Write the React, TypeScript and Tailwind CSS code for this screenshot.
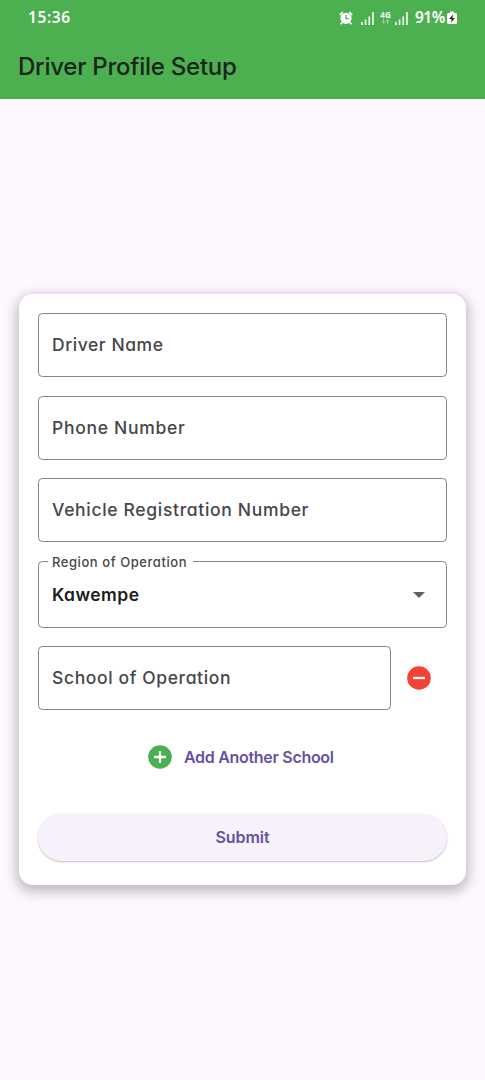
import type { ReactNode } from "react";

function Signal() {
  return (
    <svg className="h-[13px] w-[13px]" viewBox="0 0 13 13" fill="#f0f9f0">
      <path d="M0 10h1.700v3H0zM3.700 7.500h1.700v5.500H3.700zM7.400 4.500h1.700v8.500H7.400zM11.100 0h1.700v13h-1.700z" />
    </svg>
  );
}

function StatusBar() {
  return (
    <div className="flex h-9 items-center justify-between pl-[28px] pr-[28px] text-white">
      <span className="-mt-px font-['Noto_Sans'] text-[15.5px] font-semibold tracking-[0.6px]">15:36</span>
      <div className="flex items-center">
        <svg className="mr-[8px] h-[14px] w-[14px]" viewBox="0 0 14 14">
          <circle cx="7" cy="7.300" r="5.600" fill="#fff" />
          <path d="M.8 3.800L3.800 1M13.200 3.800L10.200 1M3 11.500l-1.500 1.700M11 11.500l1.500 1.700" stroke="#fff" strokeWidth="1.700" />
          <path d="M7 4v3.700h2.600" fill="none" stroke="#4caf50" strokeWidth="1.200" />
        </svg>
        <Signal />
        <div className="ml-[6px] mr-[4px] flex h-[16px] w-[11px] flex-col items-center">
          <span className="font-['Noto_Sans'] text-[8px] leading-[9px] font-bold">4G</span>
          <svg className="h-[5px] w-[9px]" viewBox="0 0 9 5" fill="none" stroke="#a5d7a7" strokeWidth=".9">
            <path d="M2.500 0v4M1 2.500l1.500 1.800L4 2.500M6.500 5V1M5 2.500L6.500.7 8 2.500" />
          </svg>
        </div>
        <Signal />
        <span className="-mt-px ml-[7px] w-[32px] whitespace-nowrap font-['Noto_Sans'] text-[15.5px] font-semibold tracking-[-0.5px]">91%</span>
        <svg className="h-[14px] w-[10px]" viewBox="0 0 10 14">
          <path d="M3 .5h4V2h1.500Q10 2 10 3.500v8Q10 13 8.500 13h-7Q0 13 0 11.500v-8Q0 2 1.500 2H3z" fill="#fff" />
          <path d="M6 3.500L2 8h2.500L4 11.500 8 7H5.500z" fill="#1d301e" />
        </svg>
      </div>
    </div>
  );
}

function Field({ children, className = "" }: { children: ReactNode; className?: string }) {
  return (
    <div className={`flex h-[64px] items-center rounded-[4.500px] border border-[#858387] pt-px pl-[13px] text-[17.5px] font-medium whitespace-nowrap text-[#49454b] ${className}`}>
      {children}
    </div>
  );
}

export default function App() {
  return (
    <div className="flex h-[1080px] w-full flex-col bg-[#fef7ff] font-['Inter',sans-serif] [font-feature-settings:'cv11']">
      <header className="h-[99px] shrink-0 bg-[#4caf50]">
        <StatusBar />
        <h1 className="pl-[18px] pt-[13px] text-[24px] leading-[36px] font-medium tracking-[-0.25px] whitespace-nowrap text-[#1a251c]">Driver Profile Setup</h1>
      </header>

      <main className="mx-[19px] mt-[195px] h-[591px] shrink-0 rounded-[14px] bg-white px-[19px] pt-[19px] shadow-[0_4px_12px_3px_rgba(0,0,0,0.24)]">
        <div className="flex w-[409px] flex-col">
          <Field><span className="tracking-[0.56px]">Driver Name</span></Field>
          <Field className="mt-[19px]"><span className="tracking-[0.7px]">Phone Number</span></Field>
          <Field className="mt-[18px]"><span className="tracking-[0.68px]">Vehicle Registration Number</span></Field>

          <fieldset className="mt-[11px] flex h-[75px] min-w-0 flex-col rounded-[4.500px] border border-[#858387] px-[9px]">
            <legend className="h-[17px] w-[145px] pl-[4px] pt-px text-[13px] leading-[17px] font-medium tracking-[0.56px] whitespace-nowrap text-[#49454b]">Region of Operation</legend>
            <div className="flex h-[50px] items-center justify-between pl-[4px] pr-[12px]">
              <span className="pt-px text-[17.5px] font-semibold tracking-[0.45px] text-[#1d1b20]">Kawempe</span>
              <svg className="h-[6px] w-[12px]" viewBox="0 0 12 6"><path d="M0 0h12L6 6z" fill="#626064" /></svg>
            </div>
          </fieldset>

          <div className="mt-[18px] flex items-center">
            <Field className="w-[353px]"><span className="tracking-[0.62px]">School of Operation</span></Field>
            <svg className="ml-[16px] h-[24px] w-[24px]" viewBox="0 0 24 24">
              <circle cx="12" cy="12" r="11.800" fill="#f44336" />
              <path d="M6 12h12" stroke="#fff" strokeWidth="2.300" />
            </svg>
          </div>

          <button className="mt-[35px] ml-[110px] flex h-[24px] items-center text-[16px] font-semibold whitespace-nowrap text-[#6750a4]">
            <svg className="mr-[12px] h-[24px] w-[24px]" viewBox="0 0 24 24">
              <circle cx="12" cy="12" r="11.800" fill="#4caf50" />
              <path d="M6 12h12M12 6v12" stroke="#fff" strokeWidth="2.300" />
            </svg>
            <span className="tracking-[-0.3px]">Add Another School</span>
          </button>

          <button className="mt-[45px] flex h-[47px] items-center justify-center rounded-full bg-[#f6f1fa] pb-[2px] text-[16px] font-semibold text-[#6750a4] shadow-[0_1px_2px_rgba(0,0,0,0.26)]">
            <span className="tracking-[-0.05px]">Submit</span>
          </button>
        </div>
      </main>
    </div>
  );
}
